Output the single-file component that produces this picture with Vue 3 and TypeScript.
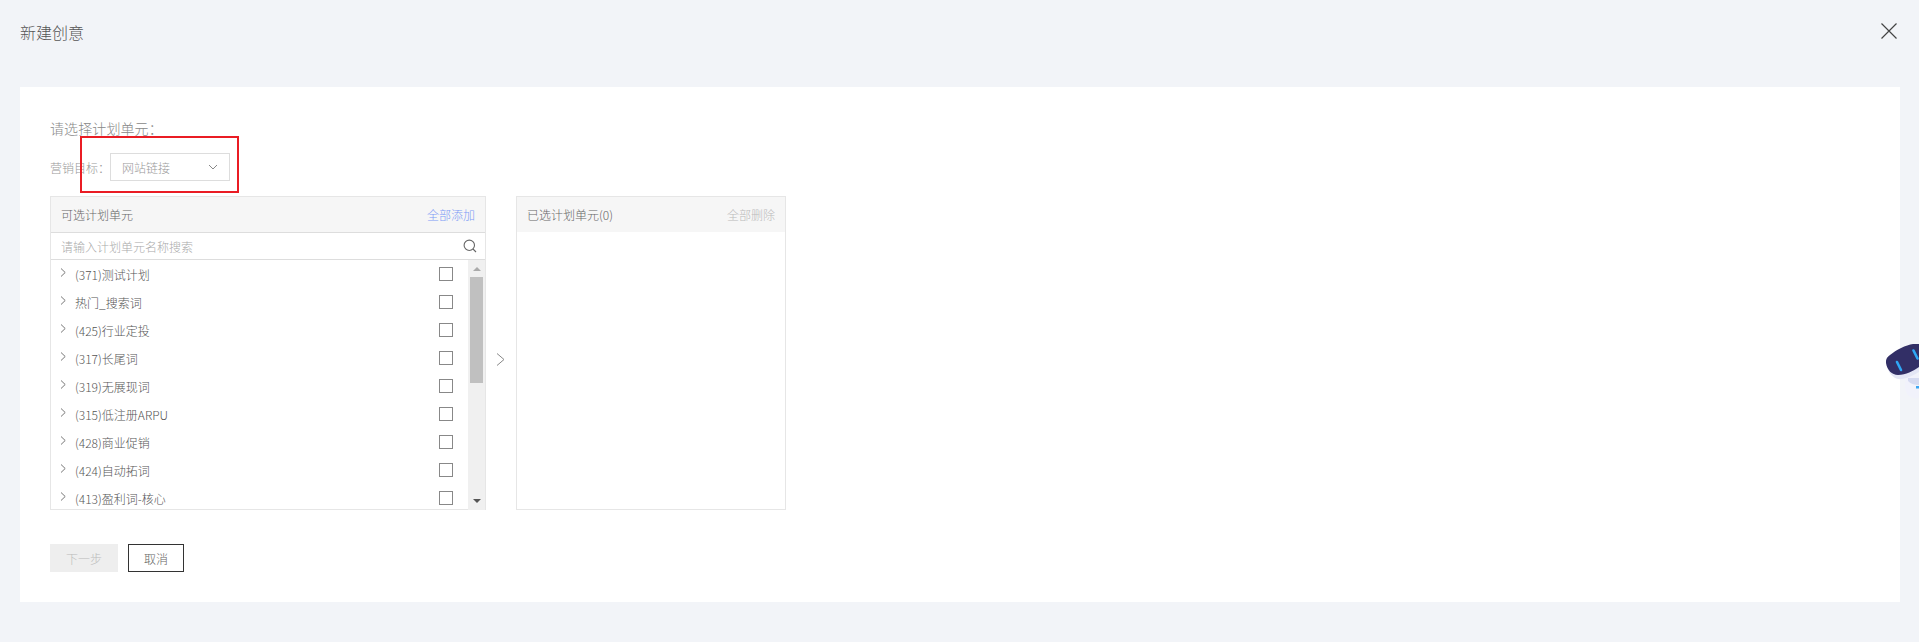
<script setup lang="ts">
const rows: string[] = [
  '(371)测试计划', '热门_搜索词', '(425)行业定投', '(317)长尾词', '(319)无展现词',
  '(315)低注册ARPU', '(428)商业促销', '(424)自动拓词', '(413)盈利词-核心',
]
</script>

<template>
  <div class="page">
    <header class="top">
      <span class="title">新建创意</span>
      <svg class="close" width="16" height="16" viewBox="0 0 16 16"><path d="M0.5 0.5 L15.5 15.5 M15.5 0.5 L0.5 15.5" stroke="#444" stroke-width="1.2" fill="none" /></svg>
    </header>
    <main class="card">
      <div class="prompt">请选择计划单元：</div>
      <div class="goal">
        <span class="goal-label">营销目标：</span>
        <div class="select">
          <span>网站链接</span>
          <svg width="10" height="6" viewBox="0 0 10 6"><path d="M1 1 L5 5 L9 1" stroke="#888" fill="none" /></svg>
        </div>
        <div class="redbox"></div>
      </div>
      <div class="transfer">
        <section class="panel left">
          <div class="phead">
            <span>可选计划单元</span>
            <span class="add">全部添加</span>
          </div>
          <div class="search">
            <span>请输入计划单元名称搜索</span>
            <svg width="14" height="14" viewBox="0 0 14 14"><circle cx="6.3" cy="6.3" r="5.2" stroke="#666" stroke-width="1.1" fill="none" /><path d="M10 10 L13 13" stroke="#666" stroke-width="1.1" /></svg>
          </div>
          <div class="listwrap">
            <ul class="list">
              <li v-for="r in rows" :key="r" class="row">
                <svg class="chev" width="6" height="9" viewBox="0 0 6 9"><path d="M1 0.5 L5.2 4.5 L1 8.5" stroke="#777" fill="none" /></svg>
                <span class="name">{{ r }}</span>
                <span class="check"></span>
              </li>
            </ul>
            <div class="sb">
              <span class="up"></span>
              <span class="thumb"></span>
              <span class="down"></span>
            </div>
          </div>
        </section>
        <div class="mid">
          <svg width="9" height="13" viewBox="0 0 9 13"><path d="M1 0.5 L8 6.5 L1 12.5" stroke="#888" fill="none" /></svg>
        </div>
        <section class="panel right">
          <div class="phead plain">
            <span>已选计划单元(0)</span>
            <span class="del">全部删除</span>
          </div>
        </section>
      </div>
      <div class="actions">
        <button class="btn next" type="button">下一步</button>
        <button class="btn cancel" type="button">取消</button>
      </div>
    </main>
    <svg class="robot" width="33" height="72" viewBox="0 0 33 72">
      <path d="M21 38 C18 44 18 54 23 58 C26 60 30 61 33 60 V36 Z" fill="#f1f2fb" />
      <path d="M22 43 C25 46 29 47 33 47 V40 H22 Z" fill="#d5daf0" />
      <rect x="30" y="48" width="3" height="2.5" fill="#3ba6f2" />
      <path d="M1 29 C4 38 10 42 16 41 C22 40 28 37 33 34 V26 Z" fill="#e4e6f5" />
      <path d="M4 17 C10 12 20 7 27 6 L33 6 V29 C27 33 20 37 12 37 C6 37 1 32 0 25 C-0.5 22 1 19 4 17 Z" fill="#322f66" />
      <path d="M11 24 L15 32" stroke="#2fa7f5" stroke-width="2.6" stroke-linecap="round" />
      <path d="M27.5 12.5 L31.5 20.5" stroke="#2fa7f5" stroke-width="2.6" stroke-linecap="round" />
    </svg>
  </div>
</template>

<style>
html, body { margin: 0; padding: 0; background: #f2f4f8; }
</style>

<style scoped>
.page {
  position: relative;
  box-sizing: border-box;
  width: 1919px;
  height: 642px;
  overflow: hidden;
  background: #f2f4f8;
  padding: 0 19px 0 20px;
  font-family: "Noto Sans CJK SC", "Noto Sans", sans-serif;
  font-weight: 300;
  color: #666;
  font-size: 12px;
}
.top {
  height: 87px;
  display: flex;
  justify-content: space-between;
  align-items: flex-start;
}
.title { font-size: 16px; line-height: 24px; margin-top: 20px; color: #555; }
.close { margin-top: 23px; margin-right: 3px; }
.card {
  height: 515px;
  box-sizing: border-box;
  background: #fff;
  padding: 31px 30px 0;
}
.prompt { font-size: 14px; line-height: 20px; color: #888; letter-spacing: 0.1px; }
.goal {
  position: relative;
  display: flex;
  align-items: center;
  margin-top: 15px;
  height: 28px;
  font-size: 12px;
  color: #999;
}
.goal-label { width: 60px; white-space: nowrap; }
.select {
  box-sizing: border-box;
  width: 120px;
  height: 28px;
  border: 1px solid #ddd;
  display: flex;
  align-items: center;
  justify-content: space-between;
  padding: 0 11px 0 11px;
}
.redbox {
  position: absolute;
  left: 30px;
  top: -17px;
  width: 159px;
  height: 57px;
  box-sizing: border-box;
  border: 2px solid #ea1c24;
}
.transfer { display: flex; margin-top: 15px; height: 314px; }
.panel { box-sizing: border-box; height: 314px; border: 1px solid #e6e6e6; }
.left { width: 436px; }
.right { width: 270px; }
.mid { width: 30px; display: flex; align-items: center; justify-content: center; padding-top: 12px; padding-right: 2px; box-sizing: border-box; }
.phead {
  height: 35px;
  background: #f6f6f6;
  border-bottom: 1px solid #ddd;
  display: flex;
  align-items: center;
  justify-content: space-between;
  padding: 0 10px;
  color: #666;
}
.phead.plain { border-bottom: none; }
.add { color: #7d9bf5; }
.del { color: #bbb; }
.search {
  height: 26px;
  border-bottom: 1px solid #ddd;
  display: flex;
  align-items: center;
  justify-content: space-between;
  padding: 0 8px 0 10px;
  color: #aaa;
}
.listwrap { display: flex; height: 250px; overflow: hidden; }
.list { flex: 1; margin: 0; padding: 0; list-style: none; }
.row {
  height: 28px;
  display: flex;
  align-items: center;
  padding: 0 15px 0 9px;
  box-sizing: border-box;
  color: #555;
}
.chev { margin-top: -3px; }
.name { margin-left: 9px; flex: 1; }
.check { box-sizing: border-box; width: 14px; height: 14px; border: 1px solid #888; }
.sb {
  position: relative;
  width: 17px;
  background: #f0f0f0;
  display: flex;
  flex-direction: column;
  align-items: center;
}
.up { margin-top: 7px; border: 4px solid transparent; border-top: 0; border-bottom: 4px solid #aaa; }
.thumb { margin-top: 6px; width: 13px; height: 106px; background: #c0c0c0; }
.down { position: absolute; bottom: 7px; border: 4px solid transparent; border-bottom: 0; border-top: 4px solid #555; }
.actions { display: flex; gap: 10px; margin-top: 34px; }
.btn {
  box-sizing: border-box;
  height: 28px;
  font: inherit;
  padding: 0;
}
.next { width: 68px; background: #eee; border: none; color: #bbb; }
.cancel { width: 56px; background: #fff; border: 1px solid #333; color: #666; }
.robot { position: absolute; left: 1886px; top: 338px; }
</style>
